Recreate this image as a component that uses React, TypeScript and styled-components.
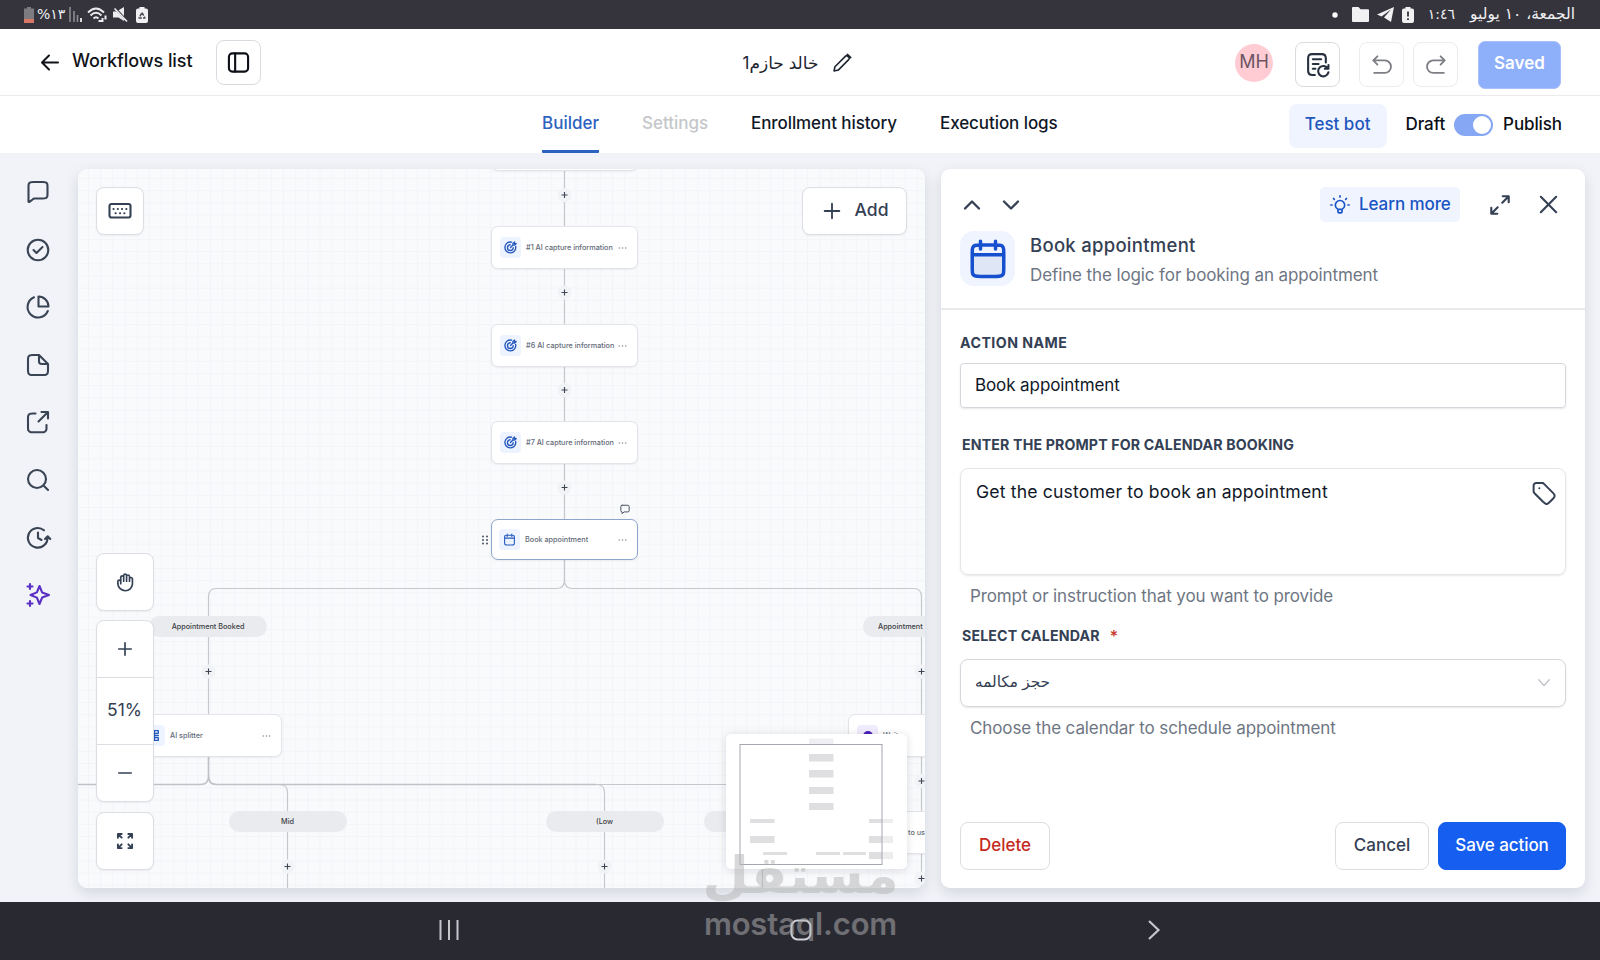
import React from 'react';
import styled, { createGlobalStyle } from 'styled-components';

const GlobalStyle = createGlobalStyle`
  *, *::before, *::after { box-sizing: border-box; }
  body { margin: 0; }
  button, input, textarea { font: inherit; color: inherit; }
`;

const ink = '#344054';
const blue = '#155eef';

/* ---------- shared pieces ---------- */

const Screen = styled.div`
  width: 1600px;
  height: 960px;
  position: relative;
  overflow: hidden;
  display: flex;
  flex-direction: column;
  background: #f1f3f8;
  color: #101828;
  font-family: Inter, 'DejaVu Sans', sans-serif;
`;

const Svg = styled.svg`
  display: block;
  flex: none;
  overflow: visible;
`;

type IconProps = { size?: number; w?: number; color?: string; children: React.ReactNode };
const Icon = ({ size = 24, w = 2, color = 'currentColor', children }: IconProps) => (
  <Svg width={size} height={size} viewBox="0 0 24 24" fill="none" stroke={color} strokeWidth={w} strokeLinecap="round" strokeLinejoin="round">
    {children}
  </Svg>
);

const Label = styled.span<{ $size?: number; $weight?: number; $color?: string; $track?: number }>`
  font-size: ${p => p.$size ?? 17}px;
  font-weight: ${p => p.$weight ?? 470};
  letter-spacing: ${p => p.$track ?? 0}px;
  color: ${p => p.$color ?? 'inherit'};
  line-height: 24px;
  white-space: nowrap;
`;

/* ---------- status bar ---------- */

const StatusBar = styled.div`
  height: 29px;
  flex: none;
  display: flex;
  align-items: center;
  justify-content: space-between;
  padding: 0 25px 0 24px;
  background: #35343d;
  color: #f0f0f2;
`;

const StatusGroup = styled.div<{ $gap: number }>`
  display: flex;
  align-items: center;
  gap: ${p => p.$gap}px;
`;

const StatusText = styled.span<{ $w: number; $size: number }>`
  font-family: 'DejaVu Sans', sans-serif;
  font-size: ${p => p.$size}px;
  line-height: 27px;
  padding-bottom: 1px;
  width: ${p => p.$w}px;
  white-space: nowrap;
`;

/* ---------- header ---------- */

const Header = styled.header`
  height: 67px;
  flex: none;
  display: grid;
  grid-template-columns: 700px 1fr 700px;
  background: #fff;
  border-bottom: 1px solid #eaebee;
`;

const HeaderLeft = styled.div`
  display: flex;
  align-items: center;
  padding: 0 0 0 38px;
  & > button { margin-left: 24px; }
`;

const BackLink = styled.div`
  display: flex;
  align-items: center;
  gap: 10px;
  span { padding-bottom: 3px; }
`;

const HeaderTitle = styled.div`
  display: flex;
  align-items: center;
  justify-content: center;
  gap: 14px;
  padding: 2px 5px 0 0;
  color: #1d2430;
`;

const HeaderRight = styled.div`
  display: flex;
  align-items: center;
  justify-content: flex-end;
  padding: 5px 39px 0 0;
`;

const SquareButton = styled.button<{ $faint?: boolean; $ml?: number }>`
  width: 45px;
  height: 45px;
  margin-left: ${p => p.$ml ?? 0}px;
  padding: 0;
  display: grid;
  place-items: center;
  background: #fff;
  border: 1px solid ${p => (p.$faint ? '#ececef' : '#d9dbe0')};
  border-radius: 8px;
  color: ${p => (p.$faint ? '#7d7f85' : '#27303f')};
`;

const Avatar = styled.div`
  width: 38px;
  height: 38px;
  margin-bottom: 3px;
  border-radius: 50%;
  display: grid;
  place-items: center;
  background: #ffccd4;
  padding-bottom: 2px;
`;

const SavedButton = styled.button`
  width: 83px;
  height: 48px;
  margin-left: 20px;
  padding: 0 0 3px;
  border: 1px solid #a9c0fb;
  border-radius: 7px;
  background: #8eaffa;
  color: #fff;
`;

/* ---------- tabs ---------- */

const TabBar = styled.nav`
  height: 57px;
  flex: none;
  display: flex;
  background: #fff;
  padding: 0 38px 0 542px;
`;

const Tab = styled.div<{ $active?: boolean; $disabled?: boolean; $w: number }>`
  width: ${p => p.$w}px;
  margin-right: 43px;
  padding-top: 15px;
  border-bottom: 3px solid ${p => (p.$active ? '#2d62c0' : 'transparent')};
  color: ${p => (p.$active ? '#2d62c0' : p.$disabled ? '#c5c7ca' : '#101828')};
  border-radius: 1px;
`;

const PublishGroup = styled.div`
  margin-left: auto;
  display: flex;
  align-items: center;
  color: #0c0f16;
  & > span { margin-bottom: 2px; }
`;

const TestBot = styled.button`
  width: 98px;
  height: 44px;
  margin: 2px 19px 0 0;
  border: 0;
  border-radius: 8px;
  background: #eff4ff;
  color: #1f57bd;
  padding: 0 0 4px;
`;

const Switch = styled.div`
  width: 39px;
  height: 22px;
  margin: 0 10px 0 9px;
  padding: 2px;
  border-radius: 11px;
  background: #86a7f3;
  display: flex;
  justify-content: flex-end;
  &::after { content: ''; width: 18px; height: 18px; border-radius: 50%; background: #fff; }
`;

/* ---------- body ---------- */

const Body = styled.main`
  flex: 1;
  min-height: 0;
  display: flex;
  padding: 16px 15px 14px 0;
`;

const Rail = styled.aside`
  width: 78px;
  display: flex;
  flex-direction: column;
  align-items: center;
  gap: 33.6px;
  padding: 11px 2px 0 0;
  color: #3a4454;
`;

const Canvas = styled.section`
  width: 847px;
  position: relative;
  overflow: hidden;
  border-radius: 9px;
  background-color: #f9fafc;
  background-image: linear-gradient(to right, #f3f4f7 1px, transparent 1px), linear-gradient(to bottom, #f3f4f7 1px, transparent 1px);
  background-size: 12.2px 12.2px;
  background-position: 10px 9px;
`;

const CanvasShadow = styled.div`
  display: flex;
  border-radius: 9px;
  margin-right: 16px;
  box-shadow: 0 5px 14px rgba(16, 24, 40, 0.13);
`;

const Edges = styled.svg`
  position: absolute;
  inset: 0;
`;

const Node = styled.div<{ $x: number; $y: number; $selected?: boolean }>`
  position: absolute;
  left: ${p => p.$x}px;
  top: ${p => p.$y}px;
  width: 147px;
  height: ${p => (p.$selected ? 41 : 43)}px;
  display: flex;
  align-items: center;
  padding: 0 10px 0 ${p => (p.$selected ? 7 : 8)}px;
  background: #fff;
  border: 1px solid ${p => (p.$selected ? '#8ea6cc' : '#e2e4e9')};
  border-radius: 7px;
  box-shadow: 0 1px 2px rgba(16, 24, 40, 0.06);
`;

const NodeIcon = styled.div<{ $violet?: boolean }>`
  width: 21px;
  height: 21px;
  border-radius: 4px;
  display: grid;
  place-items: center;
  background: ${p => (p.$violet ? '#f0ecfd' : '#edf3ff')};
  color: ${p => (p.$violet ? '#5925dc' : '#2458bd')};
`;

const NodeText = styled.span<{ $indent?: number }>`
  flex: 1;
  margin-left: ${p => p.$indent ?? 5}px;
  font-size: 7.25px;
  font-weight: 470;
  line-height: 10px;
  white-space: nowrap;
  color: #646b79;
`;

const Pill = styled.div<{ $x: number; $y: number; $left?: boolean }>`
  position: absolute;
  left: ${p => p.$x}px;
  top: ${p => p.$y}px;
  width: 118px;
  height: 21px;
  border-radius: 11px;
  background: #eaebee;
  text-align: ${p => (p.$left ? 'left' : 'center')};
  padding-left: ${p => (p.$left ? 15 : 0)}px;
  font-size: 7.25px;
  font-weight: 480;
  line-height: 21px;
  color: #3c3f46;
`;

const FloatButton = styled.button<{ $x: number; $y: number; $w: number; $h: number }>`
  position: absolute;
  left: ${p => p.$x}px;
  top: ${p => p.$y}px;
  width: ${p => p.$w}px;
  height: ${p => p.$h}px;
  padding: 0;
  display: flex;
  align-items: center;
  justify-content: center;
  gap: 12px;
  background: #fff;
  border: 1px solid #dcdee3;
  border-radius: 8px;
  box-shadow: 0 1px 2px rgba(16, 24, 40, 0.06);
  color: ${ink};
  & > span { padding-bottom: 2px; }
`;

const ZoomGroup = styled.div`
  position: absolute;
  left: 18px;
  top: 451px;
  width: 58px;
  height: 182px;
  display: grid;
  grid-template-rows: 56px 67px 1fr;
  background: #fff;
  border: 1px solid #dcdee3;
  border-radius: 8px;
  box-shadow: 0 1px 2px rgba(16, 24, 40, 0.06);
  color: ${ink};
`;

const ZoomCell = styled.div<{ $lift?: number }>`
  display: grid;
  place-items: center;
  padding: 0 1px ${p => p.$lift ?? 0}px 0;
  & + & { border-top: 1px solid #dcdee3; }
`;

const MiniMap = styled.div`
  position: absolute;
  left: 648px;
  top: 565px;
  width: 181px;
  height: 135px;
  background: #fff;
  border-radius: 5px;
  box-shadow: 0 1px 9px rgba(16, 24, 40, 0.14);
`;

const Handle = styled.div<{ $x: number; $y: number }>`
  position: absolute;
  left: ${p => p.$x}px;
  top: ${p => p.$y}px;
  color: #4b5260;
`;

/* ---------- detail panel ---------- */

const Panel = styled.section`
  flex: 1;
  display: flex;
  flex-direction: column;
  background: #fff;
  border-radius: 9px;
  box-shadow: 0 5px 14px rgba(16, 24, 40, 0.13);
`;

const PanelHead = styled.div`
  height: 141px;
  border-bottom: 2px solid #e8eaec;
  padding: 18px 0 0 19px;
`;

const PanelTools = styled.div`
  height: 35px;
  display: flex;
  align-items: center;
  color: ${ink};
  padding-right: 25px;
`;

const Chevrons = styled.div`
  display: flex;
  gap: 15px;
`;

const LearnMore = styled.div`
  width: 140px;
  height: 35px;
  margin-left: auto;
  margin-right: 29px;
  display: flex;
  align-items: center;
  gap: 9px;
  padding-left: 10px;
  border-radius: 5px;
  background: #eff4ff;
  color: #1a54c4;
  span { padding-bottom: 2px; }
`;

const WindowTools = styled.div`
  display: flex;
  align-items: center;
  gap: 26px;
`;

const PanelTitle = styled.div`
  display: flex;
  gap: 15px;
  margin-top: 9px;
`;

const TitleTile = styled.div`
  width: 55px;
  height: 55px;
  border-radius: 14px;
  background: #eff4ff;
  color: #1650cf;
  display: grid;
  place-items: center;
`;

const TitleText = styled.div`
  display: flex;
  flex-direction: column;
  gap: 6px;
  padding-top: 2px;
`;

const Form = styled.div`
  flex: 1;
  display: flex;
  flex-direction: column;
  padding: 21px 19px 0;
`;

const FieldName = styled.label<{ $indent?: number; $mt?: number; $track?: number }>`
  display: flex;
  gap: 10px;
  margin-top: ${p => p.$mt ?? 0}px;
  padding-left: ${p => p.$indent ?? 0}px;
  font-size: 14.2px;
  font-weight: 650;
  letter-spacing: ${p => p.$track ?? 0.14}px;
  line-height: 24px;
  color: ${ink};
  em { color: #c9332a; font-style: normal; font-size: 16px; font-weight: 500; }
`;

const Field = styled.div<{ $h: number; $r: number; $mt: number; $top?: boolean; $edge?: string }>`
  height: ${p => p.$h}px;
  margin-top: ${p => p.$mt}px;
  display: flex;
  align-items: ${p => (p.$top ? 'flex-start' : 'center')};
  justify-content: space-between;
  padding: ${p => (p.$top ? '11px 9px 0 15px' : '0 13px 2px 14px')};
  border: 1px solid ${p => p.$edge ?? '#d5d7dc'};
  border-radius: ${p => p.$r}px;
  box-shadow: 0 1px 2px rgba(16, 24, 40, 0.1);
`;

const Hint = styled.div<{ $mt: number }>`
  margin: ${p => p.$mt}px 0 0 10px;
  font-size: 17px;
  letter-spacing: -0.11px;
  line-height: 24px;
  color: #6e7683;
`;

const Actions = styled.div`
  display: flex;
  gap: 9px;
  margin-top: auto;
  padding-bottom: 18px;
`;

const ActionButton = styled.button<{ $w: number; $kind?: 'primary' | 'danger' }>`
  width: ${p => p.$w}px;
  height: 48px;
  padding: 0 0 2px;
  margin-right: ${p => (p.$kind === 'danger' ? 'auto' : 0)};
  border: 1px solid ${p => (p.$kind === 'primary' ? blue : '#dcdee2')};
  border-radius: 8px;
  background: ${p => (p.$kind === 'primary' ? blue : '#fff')};
  color: ${p => (p.$kind === 'primary' ? '#fff' : p.$kind === 'danger' ? '#c52a22' : ink)};
`;

/* ---------- system navigation ---------- */

const SystemNav = styled.div`
  height: 58px;
  flex: none;
  display: flex;
  align-items: center;
  justify-content: space-between;
  padding: 0 435px 2px 439px;
  background: #292932;
  color: #c6c6cb;
`;

const Watermark = styled.div`
  position: absolute;
  left: 704px;
  top: 846px;
  width: 193px;
  height: 100px;
  color: #b4b4b6;
  opacity: 0.5;
  white-space: nowrap;
`;

const MarkArabic = styled.div`
  font: bold 48px/58px 'DejaVu Sans', sans-serif;
  height: 60px;
  display: flex;
  justify-content: center;
  transform: scale(1.12, 1.08);
  transform-origin: 50% 50%;
`;

const MarkLatin = styled.div`
  font: 600 31px/36px Inter, sans-serif;
  letter-spacing: -0.15px;
  display: flex;
  justify-content: center;
`;

/* ---------- drawings ---------- */

const Target = ({ size = 13 }: { size?: number }) => (
  <Icon size={size} w={2.5}>
    <path d="M21.500 10a10 10 0 1 1-7.500-7.800M17 12.500A5.300 5.300 0 1 1 11.500 7M12 12l4.500-4.500M16.500 7.500V4.500L19.500 2v3h3l-3 2.500z" />
  </Icon>
);

const CalendarIcon = ({ size, w, fill }: { size: number; w: number; fill?: boolean }) => (
  <Icon size={size} w={w}>
    {fill && <path d="M3 9.5h18v8.3a3.7 3.7 0 0 1-3.7 3.7H6.7A3.7 3.7 0 0 1 3 17.800z" fill="#dfe6f5" stroke="none" />}
    <path d="M21 9.500H3M16.300 1.800v4.500M7.700 1.800v4.500M7.200 4h9.600c1.500 0 2.250 0 2.850.35.5.3.7.6 1 1 .35.6.35 1.350.35 2.850v9.300c0 1.700 0 2.500-.33 3.150a3 3 0 0 1-1.310 1c-.64.35-1.480.35-3.160.35H7.800c-1.680 0-2.520 0-3.160-.33a3 3 0 0 1-1.310-1.020C3 20 3 19.200 3 17.500V8.200c0-1.500 0-2.250.35-2.850.25-.4.55-.75 1-1C4.950 4 5.700 4 7.200 4z" />
  </Icon>
);

const Dots = () => (
  <Svg width="9" height="4" viewBox="0 0 9 4" fill="#8b919c">
    <circle cx="1.300" cy="2" r=".8" /><circle cx="4.500" cy="2" r=".8" /><circle cx="7.700" cy="2" r=".8" />
  </Svg>
);

const EdgePlus = ({ x, y }: { x: number; y: number }) => (
  <g>
    <circle cx={x} cy={y} r="7" fill="#f2f3f6" />
    <path d={`M${x - 3} ${y}h6M${x} ${y - 3}v6`} stroke="#3f4653" strokeWidth="1.100" />
  </g>
);

const columnPluses = [26, 123.5, 221, 318.5];

const EdgeLayer = () => (
  <Edges width="847" height="719" viewBox="0 0 847 719" fill="none">
    <g stroke="#c6c8cd" strokeWidth="1.200">
      <path d="M486.500 0V350" />
      <path d="M486.500 391V411Q486.500 419.500 478.500 419.500H138.500Q130.500 419.500 130.500 427.500V545" />
      <path d="M486.500 391V411Q486.500 419.500 494.500 419.500H835.500Q843.500 419.500 843.500 427.500V719" />
      <path d="M130.500 588V607Q130.500 615.500 138.500 615.500H201.500Q209.500 615.500 209.500 623.500V719" />
      <path d="M138.500 615.500H518.500Q526.500 615.500 526.500 623.500V719" />
      <path d="M518.500 615.500H676.500Q684.500 615.500 684.500 623.500V719" />
    </g>
    <path d="M0 615.500H122.500Q130.500 615.500 130.500 607V588M130.500 607Q130.500 615.500 138.500 615.500H518" stroke="#bfc1c7" strokeWidth="1.500" />
    {columnPluses.map(y => <EdgePlus key={y} x={486.5} y={y} />)}
    <EdgePlus x={130.5} y={502.5} />
    <EdgePlus x={843.5} y={502.5} />
    <EdgePlus x={843.5} y={612} />
    <EdgePlus x={843.5} y={709.5} />
    <EdgePlus x={209.5} y={697.5} />
    <EdgePlus x={526.5} y={697.5} />
  </Edges>
);

const captureNodes = [
  { n: 1, y: 57 },
  { n: 6, y: 155 },
  { n: 7, y: 252 },
];

const mapBars: [number, number, number, number, string][] = [
  [83, 4.5, 24.5, 6, '#efeff3'],
  [83, 20, 24.5, 7.5, '#dfdfe1'],
  [83, 36, 24.5, 7.5, '#dfdfe1'],
  [83, 53, 24.5, 7, '#dfdfe1'],
  [83, 69, 24.5, 7, '#dfdfe1'],
  [24, 85, 24.5, 4, '#dfdfe1'],
  [24, 102, 24.5, 7, '#dfdfe1'],
  [143, 85, 13, 4, '#dfdfe1'],
  [156, 85, 11, 4, '#ededef'],
  [143, 102, 13, 7, '#dfdfe1'],
  [156, 102, 11, 7, '#ededef'],
  [143, 118, 13, 7, '#dfdfe1'],
  [156, 118, 11, 7, '#ededef'],
  [37, 118, 24, 3, '#dfdfe1'],
  [90, 118, 24, 3, '#dfdfe1'],
  [117, 118, 23, 3, '#dfdfe1'],
];

const railIcons = [
  <path key="c" d="M2.500 7c0-1.700 0-2.500.33-3.200a3 3 0 0 1 1.300-1.300C4.800 2 5.600 2 7.300 2h9.400c1.700 0 2.500 0 3.200.5a3 3 0 0 1 1.300 1.300c.3.700.3 1.500.3 3.200v6.500c0 1.700 0 2.500-.33 3.200a3 3 0 0 1-1.300 1.300c-.7.5-1.500.5-3.200.5H9.500c-.6 0-.9 0-1.200.06-.5.1-.8.3-1.700.9L3.800 21.600c-.4.3-.6.400-.8.400-.3 0-.5-.2-.5-.6z" />,
  <g key="k"><circle cx="12" cy="12" r="10.300" /><path d="M7.500 12l3 3 6-6" /></g>,
  <path key="p" d="M12.500 1.500A10 10 0 0 1 22.500 11.500H12.500zM8 2.300A10.500 10.500 0 1 0 21.800 16" />,
  <path key="f" d="M13 2H7C5.300 2 4.500 2 3.800 2.400a3 3 0 0 0-1.400 1.400C2 4.500 2 5.300 2 7v10c0 1.700 0 2.500.4 3.200a3 3 0 0 0 1.400 1.400c.7.4 1.500.4 3.200.4h10c1.700 0 2.500 0 3.200-.4a3 3 0 0 0 1.400-1.400c.4-.7.4-1.500.4-3.200v-6L13 2v5.500c0 1.500 0 2 .4 2.600.6.900 1.600.9 3.100.9H22" />,
  <path key="s" d="M22 8.500V2h-6.500M22 2L12.500 11.500M9.500 3.500H7c-1.700 0-2.500 0-3.200.4a3 3 0 0 0-1.400 1.400C2 6 2 6.800 2 8.500v8.700c0 1.700 0 2.500.4 3.200a3 3 0 0 0 1.400 1.400c.7.400 1.500.400 3.200.400h8.500c1.700 0 2.500 0 3.200-.4a3 3 0 0 0 1.400-1.400c.4-.7.4-1.500.4-3.200V15" />,
  <path key="q" d="M22 22l-4.500-4.500M20 11a9 9 0 1 1-18 0 9 9 0 0 1 18 0z" />,
  <path key="t" d="M19 13l2.700-2.700L24.300 13M21.500 11.500A9.800 9.800 0 1 1 18 4.300M12 6.500V12l3.500 2M19.500 18a9.600 9.600 0 0 0 2-6" />,
];

export default function App() {
  return (
    <Screen>
      <GlobalStyle />
      <StatusBar>
        <StatusGroup $gap={6}>
          <StatusGroup $gap={3}>
            <Svg width="10" height="16" viewBox="0 0 10 16"><path d="M3 0h4v1.500h3V16H0V1.500h3z" fill="#7b7b80" /><path d="M0 12h10v4H0z" fill="#d97767" /></Svg>
            <StatusText $w={26} $size={14} dir="ltr">%١٣</StatusText>
          </StatusGroup>
          <Svg width="13" height="15" viewBox="0 0 13 15"><path d="M1 0v15M5 4v11M8.500 8v7" stroke="#8b8b91" strokeWidth="1.600" /><path d="M12 11v4" stroke="#eee" strokeWidth="1.800" /></Svg>
          <Svg width="19" height="16" viewBox="0 0 19 16" fill="none" stroke="#ededf0" strokeWidth="1.800"><path d="M0 5.500Q8-2.500 16 5.500M2.500 8.500Q8 3 13.500 8.500M5.500 11.500q2.500-2.500 5 0" /><path d="M10.500 14h3M14.500 15v-4M17.500 8.500v4" strokeWidth="2" /></Svg>
          <Svg width="15" height="15" viewBox="0 0 15 15" fill="#ededf0"><path d="M0 4.500h3.500L11 0v14L5.500 10.500H0z" /><path d="M1 0l13.500 14.500" stroke="#35343d" strokeWidth="2.400" /><path d="M1.500 1.500L14 14.500" stroke="#ededf0" strokeWidth="1.700" /></Svg>
          <Svg width="18" height="16" viewBox="-2 0 18 16" fill="#f1f1f3"><path d="M3.500 0h5v1.500H10a2 2 0 0 1 2 2V14a2 2 0 0 1-2 2H2a2 2 0 0 1-2-2V3.500a2 2 0 0 1 2-2h1.500z" /><path d="M6 5.500L9 11H3z" fill="none" stroke="#4a4952" strokeWidth="1.400" strokeDasharray="3.500 1.200" strokeLinejoin="round" /></Svg>
        </StatusGroup>
        <StatusGroup $gap={16}>
          <StatusGroup $gap={8}>
            <Svg width="12" height="6" viewBox="0 0 12 6"><circle cx="3" cy="3" r="2.700" fill="#fff" /></Svg>
            <Svg width="17" height="15" viewBox="0 0 17 15"><path d="M1 0h5.500l2 2.200H16a1 1 0 0 1 1 1V14a1 1 0 0 1-1 1H1a1 1 0 0 1-1-1V1a1 1 0 0 1 1-1z" fill="#f1f1f3" /></Svg>
            <Svg width="17" height="15" viewBox="0 0 17 15"><path d="M17 0L0 7.500l4.500 2L14 2.500 7 10.500 14 15z" fill="#f1f1f3" /></Svg>
            <Svg width="12" height="16" viewBox="0 0 12 16"><path d="M3.500 0h5v1.500H10a2 2 0 0 1 2 2V14a2 2 0 0 1-2 2H2a2 2 0 0 1-2-2V3.500a2 2 0 0 1 2-2h1.500z" fill="#f1f1f3" /><path d="M6 4.500V9.500M6 11.200v1.800" stroke="#35343d" strokeWidth="1.800" /></Svg>
          </StatusGroup>
          <StatusText $w={25} $size={14} dir="rtl">١:٤٦</StatusText>
          <StatusText $w={104} $size={15.5} dir="rtl">الجمعة، ١٠ يوليو</StatusText>
        </StatusGroup>
      </StatusBar>

      <Header>
        <HeaderLeft>
          <BackLink>
            <Icon size={24} color="#101318"><path d="M20 12.500H4.500M11 19.500l-7-7 7-7" /></Icon>
            <Label $size={18} $track={-0.08} $color="#101318">Workflows list</Label>
          </BackLink>
          <SquareButton>
            <Icon size={23} w={2.2} color="#0d1017"><rect x="2" y="2.500" width="20" height="19" rx="3.500" /><path d="M8.500 2.500v19" /></Icon>
          </SquareButton>
        </HeaderLeft>
        <HeaderTitle>
          <Label dir="rtl" $size={17} $weight={400}>خالد حازم1</Label>
          <Icon size={20} w={1.9}><path d="M2.500 21.500l1-5L16 4q1.500-1.500 3 0l1 1q1.500 1.500 0 3L7.500 20.500zM18.500 1.500l4 4" /></Icon>
        </HeaderTitle>
        <HeaderRight>
          <Avatar><Label $size={18} $weight={400} $color="#6b5563">MH</Label></Avatar>
          <SquareButton $ml={22}>
            <Icon size={25} w={2}><path d="M9.500 22H7c-2.800 0-4-1.200-4-4V6c0-2.800 1.200-4 4-4h9c2.800 0 4 1.200 4 4v4M7.500 7h8M7.500 11.500h5.500M7.500 16h2.500M22.500 12.500v3.500h-3.500M22 16a5 5 0 1 0 .5 3.500" /></Icon>
          </SquareButton>
          <SquareButton $faint $ml={19}><Icon size={22} w={2}><path d="M7 2.500L2.500 7 7 11.500M2.500 7H15a6.800 6.800 0 0 1 0 13.600H3.500" /></Icon></SquareButton>
          <SquareButton $faint $ml={9}><Icon size={22} w={2}><path d="M17 2.500L21.500 7 17 11.500M21.500 7H9a6.800 6.800 0 0 0 0 13.600H20.500" /></Icon></SquareButton>
          <SavedButton><Label $size={17} $weight={560}>Saved</Label></SavedButton>
        </HeaderRight>
      </Header>

      <TabBar>
        <Tab $w={57} $active><Label>Builder</Label></Tab>
        <Tab $w={66} $disabled><Label>Settings</Label></Tab>
        <Tab $w={146}><Label $track={-0.08}>Enrollment history</Label></Tab>
        <Tab $w={118}><Label $track={-0.08}>Execution logs</Label></Tab>
        <PublishGroup>
          <TestBot><Label>Test bot</Label></TestBot>
          <Label $track={-0.1}>Draft</Label>
          <Switch />
          <Label $track={-0.1}>Publish</Label>
        </PublishGroup>
      </TabBar>

      <Body>
        <Rail>
          {railIcons.map((shape, i) => <Icon key={i} size={24} w={2.1}>{shape}</Icon>)}
          <Icon size={24} w={2.1} color="#5b2fc4"><path d="M13.500 3l2.600 6.400L23 12l-6.900 2.600L13.500 21l-2.600-6.400L4.500 12l6.400-2.600zM4 1v5M1.500 3.500h5M4 18v5M1.500 20.500h5" /></Icon>
        </Rail>

        <CanvasShadow>
          <Canvas>
            <EdgeLayer />
            <Node $x={413} $y={-41} />
            {captureNodes.map(c => (
              <Node key={c.n} $x={413} $y={c.y}>
                <NodeIcon><Target /></NodeIcon>
                <NodeText>#{c.n} AI capture information</NodeText>
                <Dots />
              </Node>
            ))}
            <Node $x={413} $y={350} $selected>
              <NodeIcon><CalendarIcon size={13} w={2} /></NodeIcon>
              <NodeText>Book appointment</NodeText>
              <Dots />
            </Node>
            <Handle $x={542} $y={335}><Icon size={10} w={2.4}><path d="M5 3h14a3 3 0 0 1 3 3v10a3 3 0 0 1-3 3H10l-5 4v-4a3 3 0 0 1-3-3V6a3 3 0 0 1 3-3z" /></Icon></Handle>
            <Handle $x={403} $y={366}>
              <Svg width="8" height="10" viewBox="0 0 8 10" fill="currentColor">
                {[1.5, 5, 8.5].map(y => <g key={y}><circle cx="2" cy={y} r="1" /><circle cx="6" cy={y} r="1" /></g>)}
              </Svg>
            </Handle>

            <Pill $x={71} $y={447}>Appointment Booked</Pill>
            <Pill $x={785} $y={447} $left>Appointment</Pill>
            <Node $x={57} $y={545}>
              <NodeIcon><Icon size={13} w={2.4}><path d="M12 5v14M5 3h14v5H5zM5 16h14v5H5zM5 12h14" /></Icon></NodeIcon>
              <NodeText>AI splitter</NodeText>
              <Dots />
            </Node>
            <Node $x={770} $y={545}>
              <NodeIcon $violet><Svg width="12" height="12" viewBox="0 0 12 12"><circle cx="6" cy="6" r="5" fill="#4a1fb8" /><path d="M6 5v2l2 1" stroke="#fff" fill="none" /></Svg></NodeIcon>
              <NodeText>Wait</NodeText>
            </Node>
            <Node $x={771} $y={642}><NodeText $indent={50}>to us</NodeText></Node>
            <Pill $x={150.5} $y={642}>Mid</Pill>
            <Pill $x={467.5} $y={642}>(Low</Pill>
            <Pill $x={626} $y={642} />

            <FloatButton $x={18} $y={18} $w={48} $h={48}>
              <Icon size={24} w={2.1}><rect x="1.500" y="5" width="21" height="13.500" rx="2" /><path d="M5.500 10h.1M9.800 10h.1M14 10h.1M18.300 10h.1M7.600 14.300h.1M12 14.300h.1M16.300 14.300h.1" /></Icon>
            </FloatButton>
            <FloatButton $x={724} $y={18} $w={105} $h={48}>
              <Icon size={22} w={2}><path d="M12 4v16M4 12h16" /></Icon>
              <Label $size={17.5}>Add</Label>
            </FloatButton>
            <FloatButton $x={18} $y={384} $w={58} $h={58}>
              <Icon size={20} w={2}><path d="M6.900 12.500V6a1.800 1.800 0 0 1 3.500 0v5M10.400 10V4a1.800 1.800 0 0 1 3.500 0v7M13.900 5a1.800 1.800 0 0 1 3.500 0v6M17.400 8a1.800 1.800 0 0 1 3.500 0v6.500A8.500 8.500 0 0 1 12.400 22.500 9 9 0 0 1 3.400 14v-2.500a1.700 1.700 0 0 1 3.500 0v2.500" /></Icon>
            </FloatButton>
            <ZoomGroup>
              <ZoomCell $lift={1}><Icon size={20} w={2}><path d="M12 4.500v15M4.500 12h15" /></Icon></ZoomCell>
              <ZoomCell $lift={3}><Label $size={17.5} $weight={400}>51%</Label></ZoomCell>
              <ZoomCell><Icon size={20} w={2}><path d="M4.500 12h15" /></Icon></ZoomCell>
            </ZoomGroup>
            <FloatButton $x={18} $y={643} $w={58} $h={58}>
              <Icon size={20} w={2.3}><path d="M3.500 8V3.500H8M3.500 3.500l4.500 4.500M16 3.500h4.500V8M20.500 3.500L16 8M3.500 16v4.500H8M3.500 20.500L8 16M16 20.500h4.500V16M20.500 20.500L16 16" /></Icon>
            </FloatButton>

            <MiniMap>
              <Svg width="181" height="135" viewBox="0 0 181 135">
                {mapBars.map(([x, y, w, h, fill], i) => <rect key={i} x={x} y={y} width={w} height={h} fill={fill} />)}
                <rect x="14" y="10.500" width="142" height="120" fill="none" stroke="#a4a7b0" />
              </Svg>
            </MiniMap>
          </Canvas>
        </CanvasShadow>

        <Panel>
          <PanelHead>
            <PanelTools>
              <Chevrons>
                <Icon size={24} w={2.3}><path d="M5 15.500l7-7 7 7" /></Icon>
                <Icon size={24} w={2.3}><path d="M5 8.500l7 7 7-7" /></Icon>
              </Chevrons>
              <LearnMore>
                <Icon size={20} w={2}><path d="M9.500 17v2.500a2 2 0 0 0 2 2h1a2 2 0 0 0 2-2V17M9.500 17.200a5.600 5.600 0 1 1 5 0zM12 1v1.500M1 12h1.500M21.500 12H23M4.200 4.200l1 1M19.800 4.200l-1 1" /></Icon>
                <Label $track={-0.08}>Learn more</Label>
              </LearnMore>
              <WindowTools>
                <Icon size={22} w={2.3}><path d="M15 2.500h6.500V9M21.500 2.500L14.500 9.500M9 21.500H2.500V15M2.500 21.500L9.500 14.500" /></Icon>
                <Icon size={23} w={2.2}><path d="M4 4l16 16M20 4L4 20" /></Icon>
              </WindowTools>
            </PanelTools>
            <PanelTitle>
              <TitleTile><CalendarIcon size={42} w={2} fill /></TitleTile>
              <TitleText>
                <Label $size={18.5} $track={0.28} $color={ink}>Book appointment</Label>
                <Label $weight={400} $track={-0.11} $color="#6e7683">Define the logic for booking an appointment</Label>
              </TitleText>
            </PanelTitle>
          </PanelHead>
          <Form>
            <FieldName $track={0.45}>ACTION NAME</FieldName>
            <Field $h={45} $r={4} $mt={8}><Label $weight={400} $track={-0.1}>Book appointment</Label></Field>
            <FieldName $indent={2} $mt={25}>ENTER THE PROMPT FOR CALENDAR BOOKING</FieldName>
            <Field $h={107} $r={8} $mt={11} $top $edge="#e4e5e9">
              <Label $size={17.6} $weight={400} $track={0.16}>Get the customer to book an appointment</Label>
              <Icon size={25} w={1.9} color={ink}><path d="M8 8h.01M2.500 5v5.300c0 .6 0 .8.07 1.100.1.300.2.500.35.700.1.200.3.400.7.800l7.900 8c1.200 1.100 1.800 1.700 2.500 1.900.6.200 1.200.2 1.800 0 .7-.2 1.300-.8 2.400-1.900l2.400-2.400c1.100-1.100 1.700-1.700 1.900-2.400.2-.6.200-1.200 0-1.800-.2-.7-.8-1.300-1.900-2.400l-7.900-7.900c-.4-.4-.6-.6-.8-.7-.2-.2-.5-.3-.7-.35-.3-.05-.6-.05-1.100-.05H5a2.500 2.500 0 0 0-2.500 2.500z" /></Icon>
            </Field>
            <Hint $mt={9}>Prompt or instruction that you want to provide</Hint>
            <FieldName $indent={2} $mt={16}>SELECT CALENDAR <em>*</em></FieldName>
            <Field $h={48} $r={8} $mt={11}>
              <Label dir="rtl" $size={15.3} $weight={400} $color={ink}>حجز مكالمه</Label>
              <Icon size={16} w={1.9} color="#b9bcc2"><path d="M4 8.500l8 9 8-9" /></Icon>
            </Field>
            <Hint $mt={9}>Choose the calendar to schedule appointment</Hint>
            <Actions>
              <ActionButton $w={90} $kind="danger"><Label>Delete</Label></ActionButton>
              <ActionButton $w={94}><Label>Cancel</Label></ActionButton>
              <ActionButton $w={128} $kind="primary"><Label $track={-0.08}>Save action</Label></ActionButton>
            </Actions>
          </Form>
        </Panel>
      </Body>

      <SystemNav>
        <Svg width="20" height="20" viewBox="0 0 20 20" stroke="currentColor" strokeWidth="2"><path d="M1.500 0v20M10 0v20M18.500 0v20" /></Svg>
        <Svg width="22" height="22" viewBox="0 0 22 22" fill="none" stroke="#d0d0d8" strokeWidth="2"><rect x="1.500" y="1.500" width="19" height="19" rx="6" /></Svg>
        <Svg width="22" height="22" viewBox="0 0 22 22" fill="none" stroke="currentColor" strokeWidth="2.200"><path d="M6 2l9.500 9L6 20" /></Svg>
      </SystemNav>

      <Watermark>
        <MarkArabic dir="rtl">مستقل</MarkArabic>
        <MarkLatin>mostaql.com</MarkLatin>
      </Watermark>
    </Screen>
  );
}
